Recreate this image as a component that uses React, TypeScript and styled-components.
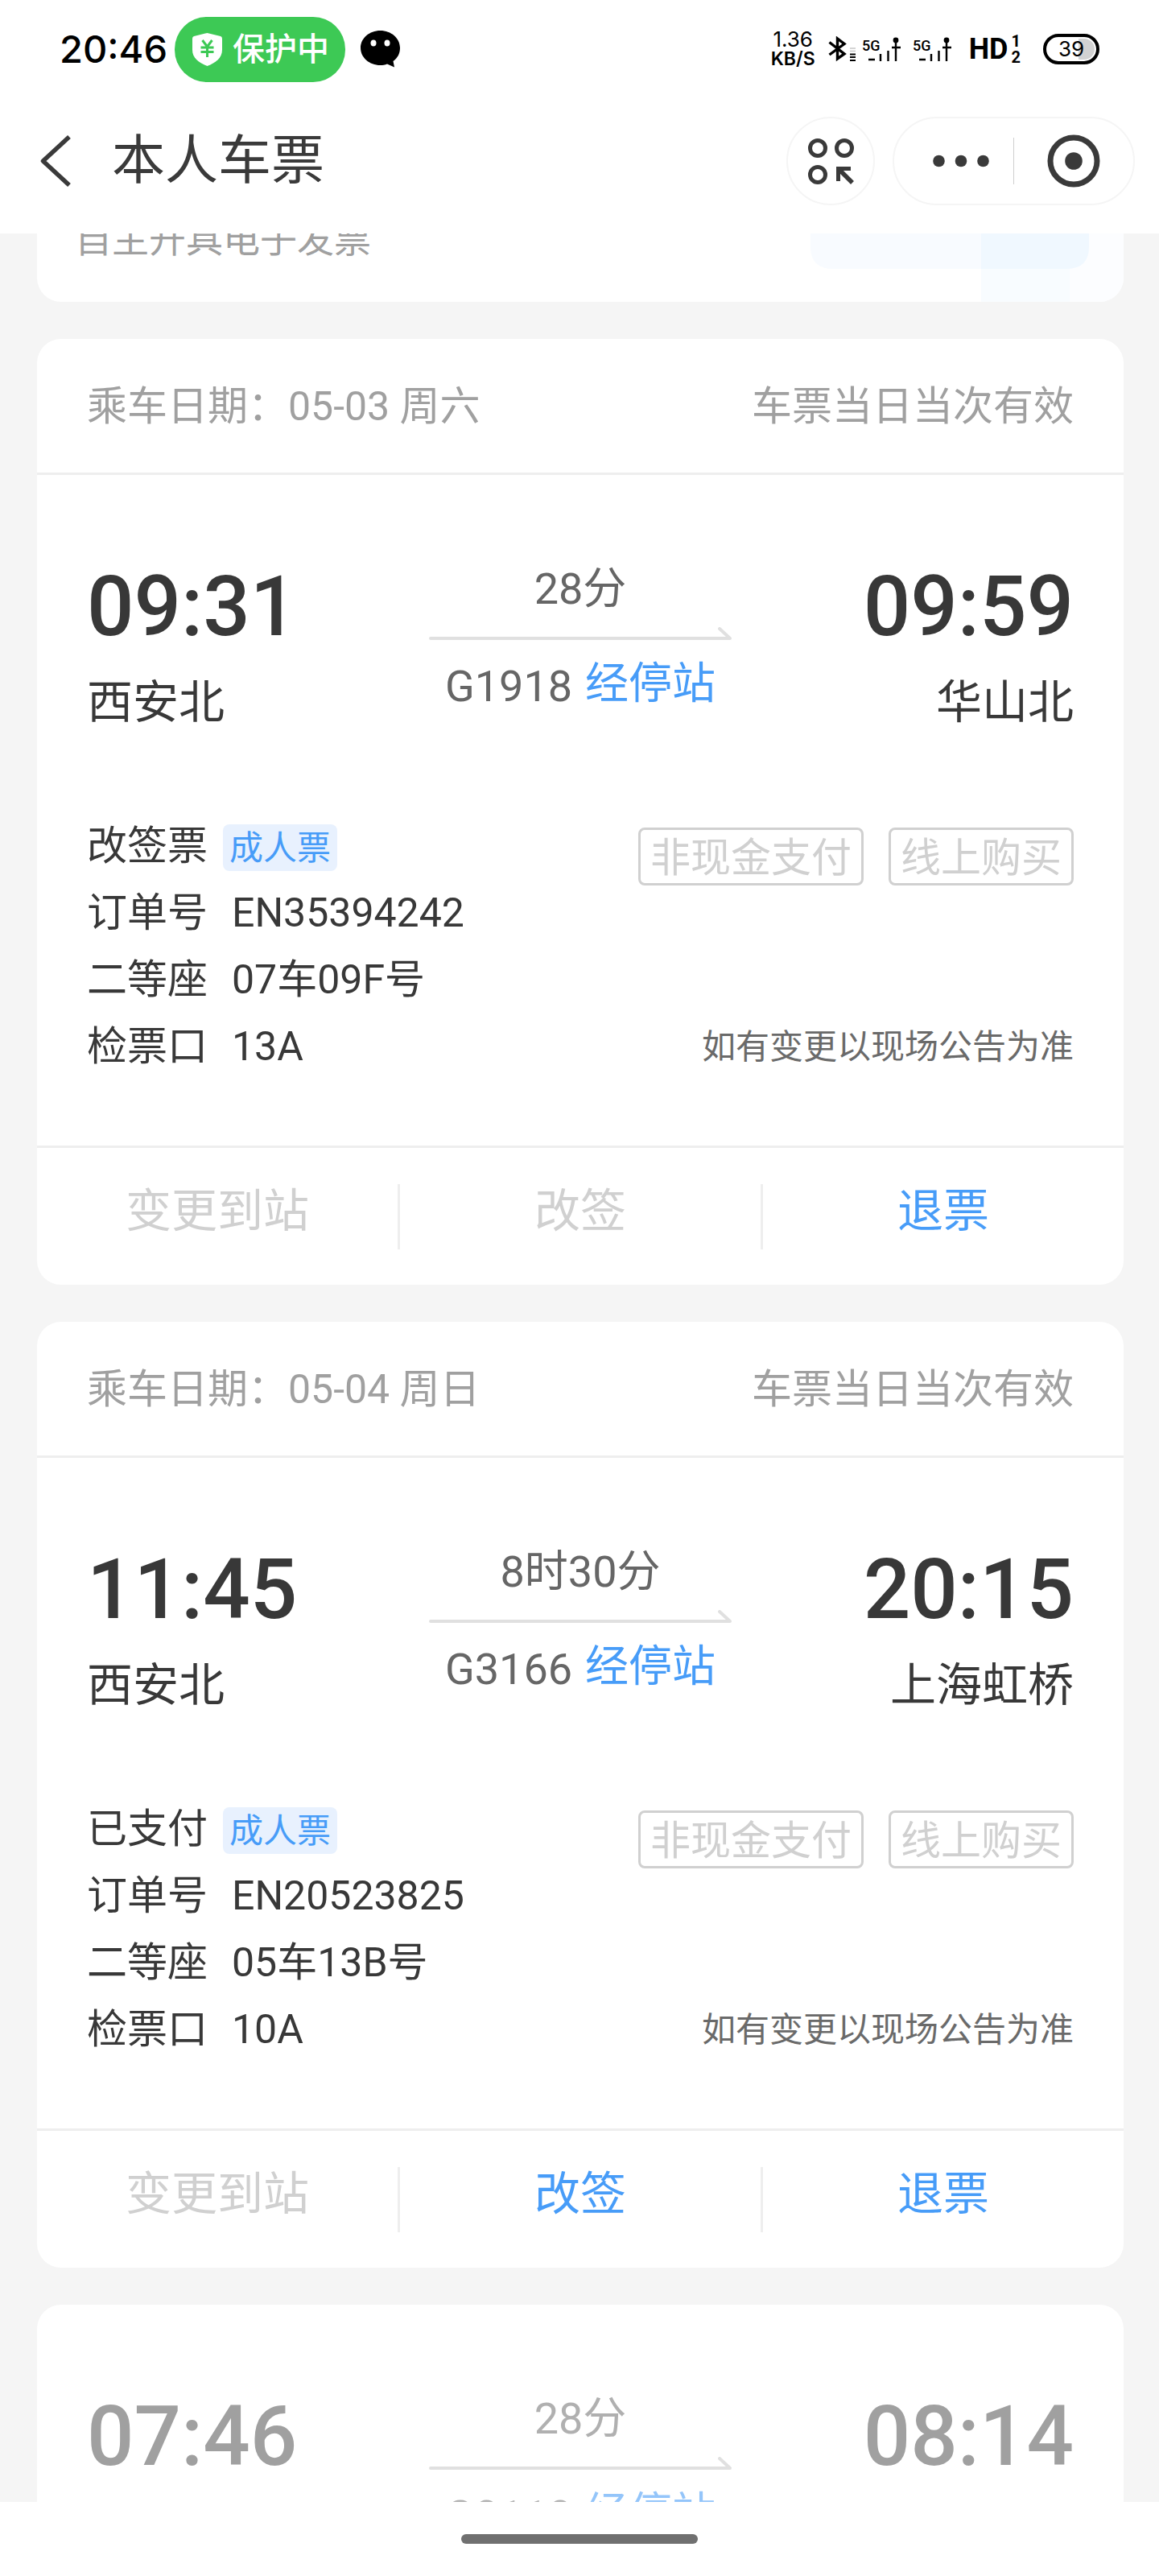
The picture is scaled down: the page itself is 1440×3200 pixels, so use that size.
import React from "react";
import styled, { createGlobalStyle } from "styled-components";

const GlobalStyle = createGlobalStyle`
  *, *::before, *::after { box-sizing: border-box; }
  body {
    margin: 0;
    background: #fff;
    color: #383838;
    font-family: Roboto, "Noto Sans CJK SC", sans-serif;
  }
  button { font: inherit; border: 0; padding: 0; background: none; color: inherit; }
  svg { display: block; flex: none; }
`;

const Screen = styled.div`
  display: flex;
  flex-direction: column;
  height: 100vh;
`;

/* ---------- status bar ---------- */

const StatusBar = styled.div`
  display: flex;
  align-items: center;
  justify-content: space-between;
  height: 122px;
  padding: 0 74px;
  color: #000;
  font-family: Inter, Roboto, "Noto Sans CJK SC", sans-serif;
`;

const StatusGroup = styled.div`
  display: flex;
  align-items: center;
`;

const Clock = styled.time`
  font-size: 47px;
  font-weight: 500;
  line-height: 60px;
`;

const ProtectPill = styled.div`
  display: flex;
  align-items: center;
  gap: 13px;
  height: 81px;
  margin: 0 19px 0 9px;
  padding: 0 20px 0 22px;
  border-radius: 40px;
  background: #3dc955;
  color: #fff;
  font-size: 40px;
  font-weight: 500;
  line-height: 60px;
`;

const Speed = styled.div`
  display: flex;
  flex-direction: column;
  align-items: center;
  margin-right: 16px;
  font-size: 26px;
  line-height: 24px;
`;

const SpeedUnit = styled.span`
  font-size: 23px;
  font-weight: 600;
`;

const Signals = styled.div`
  display: flex;
  gap: 15px;
  margin: 0 22px 0 8px;
`;

const HdMark = styled.div`
  display: flex;
  align-items: center;
  gap: 4px;
  margin-right: 28px;
  font-family: "Liberation Sans Narrow", Roboto, sans-serif;
  font-size: 36px;
  font-weight: 700;
  line-height: 40px;
`;

const SimSlots = styled.span`
  display: flex;
  flex-direction: column;
  font-size: 20px;
  line-height: 20px;
`;

const Battery = styled.div`
  display: flex;
  align-items: center;
  justify-content: center;
  width: 70px;
  height: 38px;
  border: 4px solid #000;
  border-radius: 19px;
  background: linear-gradient(to right, #fff 64%, #d2d2d2 64%) padding-box;
  box-shadow: inset 0 0 0 2px #fff;
  font-size: 26px;
  line-height: 30px;
`;

/* ---------- navigation bar ---------- */

const NavBar = styled.header`
  display: flex;
  align-items: center;
  height: 168px;
  padding: 0 30px 12px 48px;
  color: #3a3a3a;
`;

const BackButton = styled.button`
  padding-right: 50px;
`;

const Title = styled.h1`
  flex: 1;
  margin: 0;
  font-size: 66px;
  font-weight: 400;
  line-height: 80px;
`;

const RoundButton = styled.button`
  display: flex;
  align-items: center;
  justify-content: center;
  width: 110px;
  height: 110px;
  margin-right: 22px;
  border: 2px solid #f5f5f5;
  border-radius: 55px;
`;

const Capsule = styled.div`
  display: flex;
  align-items: center;
  height: 110px;
  border: 2px solid #f5f5f5;
  border-radius: 55px;
`;

const CapsuleButton = styled.button`
  display: flex;
  align-items: center;
  justify-content: center;
  width: 148px;
  height: 106px;
  &:first-child { padding-left: 18px; }
`;

const CapsuleRule = styled.span`
  width: 1px;
  height: 58px;
  background: #d0d0d0;
`;

/* ---------- ticket list ---------- */

const Scroller = styled.main`
  flex: 1;
  min-height: 0;
  overflow-y: auto;
  scrollbar-width: none;
  padding: 0 44px 0 46px;
  background: #f5f5f5;
`;

const List = styled.div`
  display: flex;
  flex-direction: column;
  gap: 46px;
  margin-top: -50px;
`;

const Card = styled.article`
  overflow: hidden;
  flex: none;
  border-radius: 30px;
  background: #fff;
`;

const InvoiceCard = styled(Card)`
  display: flex;
  justify-content: space-between;
`;

const InvoiceText = styled.p`
  margin: 0;
  padding: 27px 0 48px 47px;
  color: #a0a0a0;
  font-size: 46px;
  line-height: 60px;
`;

const CardHead = styled.div`
  display: flex;
  justify-content: space-between;
  padding: 49px 62px 47px;
  border-bottom: 3px solid #eee;
  color: #a0a0a0;
  font-size: 50px;
  line-height: 70px;
`;

const Route = styled.div<{ $past?: boolean }>`
  display: grid;
  grid-template-columns: 1fr 377px 1fr;
  padding: 105px 62px 102px;
  color: ${(p) => (p.$past ? "#a0a0a0" : "#383838")};
`;

const Stop = styled.div<{ $end?: boolean }>`
  display: flex;
  flex-direction: column;
  gap: 25px;
  text-align: ${(p) => (p.$end ? "right" : "left")};
`;

const StopTime = styled.time`
  font-size: 103px;
  font-weight: 500;
  line-height: 118px;
`;

const StopName = styled.span`
  font-size: 57px;
  line-height: 70px;
`;

const Trip = styled.div<{ $past?: boolean }>`
  display: flex;
  flex-direction: column;
  align-items: center;
  height: 213px;
  padding-top: 7px;
  color: ${(p) => (p.$past ? "#b0b0b0" : "#666")};
  font-size: 54px;
  line-height: 60px;
`;

const TripArrow = styled.svg`
  width: 377px;
  height: 16px;
  margin: 17px 0 25px;
`;

const TrainLine = styled.div`
  display: flex;
  align-items: flex-start;
  gap: 16px;
`;

const TrainNumber = styled.span`
  line-height: 66px;
`;

const StopsLink = styled.a<{ $past?: boolean }>`
  color: ${(p) => (p.$past ? "#94c5fa" : "#479cf8")};
  text-decoration: none;
`;

const Info = styled.div`
  display: flex;
  justify-content: space-between;
  padding: 0 62px 81px;
`;

const InfoRow = styled.div`
  display: flex;
  align-items: center;
  font-size: 50px;
  line-height: 83px;
`;

const InfoValue = styled.span`
  margin-left: 30px;
`;

const PassengerTag = styled.span`
  margin: 3px 0 0 19px;
  padding: 2px 8px 0;
  border-radius: 8px;
  background: #e8f1fe;
  color: #479cf8;
  font-size: 42px;
  line-height: 56px;
`;

const InfoSide = styled.div`
  display: flex;
  flex-direction: column;
  align-items: flex-end;
  justify-content: space-between;
  padding-top: 18px;
`;

const Badges = styled.div`
  display: flex;
  gap: 31px;
`;

const Badge = styled.span`
  padding: 4px 12px 0;
  border: 3px solid #d0d0d0;
  border-radius: 8px;
  color: #d0d0d0;
  font-size: 50px;
  line-height: 62px;
`;

const Notice = styled.span`
  color: #6a6a6a;
  font-size: 42px;
  line-height: 83px;
`;

const Actions = styled.div`
  display: grid;
  grid-template-columns: 1fr auto 1fr auto 1fr;
  align-items: center;
  height: 173px;
  border-top: 3px solid #eee;
`;

const ActionButton = styled.button`
  height: 170px;
  padding-bottom: 12px;
  color: #479cf8;
  font-size: 57px;
  line-height: 70px;
  &:disabled { color: #d0d0d0; }
`;

const ActionRule = styled.span`
  width: 3px;
  height: 81px;
  background: #eee;
`;

const GestureArea = styled.footer`
  display: flex;
  justify-content: center;
  height: 92px;
  padding-top: 40px;
`;

const GestureBar = styled.span`
  width: 294px;
  height: 12px;
  border-radius: 6px;
  background: #707070;
`;

/* ---------- icons ---------- */

const ShieldIcon = () => (
  <svg width="37" height="41" viewBox="0 0 37 41" aria-hidden="true">
    <path d="M18.500 0 L35 4 Q37 4.500 37 7 V21 C37 31 29 37 18.500 41 C8 37 0 31 0 21 V7 Q0 4.500 2 4 Z" fill="#fff" />
    <path d="M12.500 9 L18.500 17 L24.500 9 M10.500 18 H26.500 M10.500 23.500 H26.500 M18.500 17 V30" fill="none" stroke="#3dc955" strokeWidth="3" />
  </svg>
);

const FaceIcon = () => (
  <svg width="50" height="46" viewBox="0 0 50 46" aria-hidden="true">
    <path d="M24.500 0 C38 0 49 9.500 49 21.500 C49 28.500 46 34 40.500 38 L42 45.500 L33 41.500 C30.500 42.500 27.500 43 24.500 43 C11 43 0 33.500 0 21.500 C0 9.500 11 0 24.500 0 Z" fill="#000" />
    <ellipse cx="16" cy="15.500" rx="3.500" ry="4" fill="#fff" />
    <ellipse cx="33" cy="15.500" rx="3.500" ry="4" fill="#fff" />
  </svg>
);

const BluetoothIcon = () => (
  <svg width="34" height="32" viewBox="0 0 34 32" aria-hidden="true">
    <path d="M1.500 7.500 L20 22 L11.500 28 V3 L20 9.500 L1.500 23" fill="none" stroke="#000" strokeWidth="3.400" />
    <path d="M27 15 H34 M27 18.500 H34" stroke="#c8c8c8" strokeWidth="1.500" />
    <path d="M27 22.500 H34 M27 26 H34 M27 30 H34" stroke="#000" strokeWidth="2" />
  </svg>
);

const SignalIcon = () => (
  <svg width="48" height="32" viewBox="0 0 48 32">
    <text x="0" y="18" fontFamily="Roboto, sans-serif" fontSize="18" fontWeight="500">5G</text>
    <path d="M8 29 H16 M23 22 V31 M32.500 18 V31 M42 4 V31 M37 14 H48" stroke="#000" strokeWidth="2.400" fill="none" />
    <circle cx="42" cy="5" r="3.400" fill="#000" />
  </svg>
);

const BackIcon = () => (
  <svg width="41" height="64" viewBox="0 0 41 64" aria-hidden="true">
    <path d="M38 2 L5.500 32 L38 62" fill="none" stroke="#3a3a3a" strokeWidth="5.500" strokeLinejoin="round" />
  </svg>
);

const AppsIcon = () => (
  <svg width="57" height="57" viewBox="0 0 57 57" aria-hidden="true">
    <g fill="none" stroke="#3a3a3a" strokeWidth="5">
      <circle cx="12" cy="12" r="9.500" />
      <circle cx="45" cy="12" r="9.500" />
      <circle cx="12" cy="45" r="9.500" />
      <path d="M37.500 53 V37.500 H53" />
      <path d="M38.500 38.500 L55 55" strokeWidth="5.500" />
    </g>
  </svg>
);

const MoreIcon = () => (
  <svg width="70" height="16" viewBox="0 0 70 16" aria-hidden="true" fill="#3a3a3a">
    <circle cx="7.500" cy="8" r="7.300" />
    <circle cx="35" cy="8" r="7.300" />
    <circle cx="62.500" cy="8" r="7.300" />
  </svg>
);

const CloseIcon = () => (
  <svg width="66" height="66" viewBox="0 0 66 66" aria-hidden="true">
    <circle cx="33" cy="33" r="29" fill="none" stroke="#3a3a3a" strokeWidth="7" />
    <circle cx="33" cy="33" r="10.800" fill="#3a3a3a" />
  </svg>
);

const InvoiceArt = () => (
  <svg width="389" height="135" viewBox="0 0 389 135" aria-hidden="true">
    <rect x="212" width="177" height="135" fill="#fcfdff" />
    <rect x="212" width="110" height="135" fill="#f8fcff" />
    <path d="M0 0 H346 V66 Q346 94 318 94 H28 Q0 94 0 66 Z" fill="#f8fbff" />
    <path d="M212 0 H346 V66 Q346 94 318 94 H212 Z" fill="#f0f8ff" />
  </svg>
);

/* ---------- data and page ---------- */

interface Journey {
  depart: string;
  arrive: string;
  from: string;
  to: string;
  duration: string;
  train: string;
}

interface Ticket extends Journey {
  date: string;
  status: string;
  order: string;
  seat: string;
  gate: string;
  canRebook: boolean;
}

const tickets: Ticket[] = [
  {
    date: "05-03 周六", depart: "09:31", arrive: "09:59", from: "西安北", to: "华山北",
    duration: "28分", train: "G1918", status: "改签票", order: "EN35394242",
    seat: "07车09F号", gate: "13A", canRebook: false,
  },
  {
    date: "05-04 周日", depart: "11:45", arrive: "20:15", from: "西安北", to: "上海虹桥",
    duration: "8时30分", train: "G3166", status: "已支付", order: "EN20523825",
    seat: "05车13B号", gate: "10A", canRebook: true,
  },
];

const pastJourney: Journey = {
  depart: "07:46", arrive: "08:14", from: "华山北", to: "西安北", duration: "28分", train: "G3118",
};

function RouteSection({ journey, past }: { journey: Journey; past?: boolean }) {
  return (
    <Route $past={past}>
      <Stop>
        <StopTime>{journey.depart}</StopTime>
        <StopName>{journey.from}</StopName>
      </Stop>
      <Trip $past={past}>
        <span>{journey.duration}</span>
        <TripArrow viewBox="0 0 377 16" aria-hidden="true">
          <path d="M2 14 H374 L361 2" fill="none" stroke="#e0e0e0" strokeWidth="4" strokeLinecap="round" strokeLinejoin="round" />
        </TripArrow>
        <TrainLine>
          <TrainNumber>{journey.train}</TrainNumber>
          <StopsLink href="#stops" $past={past}>经停站</StopsLink>
        </TrainLine>
      </Trip>
      <Stop $end>
        <StopTime>{journey.arrive}</StopTime>
        <StopName>{journey.to}</StopName>
      </Stop>
    </Route>
  );
}

function TicketCard({ ticket }: { ticket: Ticket }) {
  return (
    <Card>
      <CardHead>
        <span>乘车日期：{ticket.date}</span>
        <span>车票当日当次有效</span>
      </CardHead>
      <RouteSection journey={ticket} />
      <Info>
        <div>
          <InfoRow>{ticket.status}<PassengerTag>成人票</PassengerTag></InfoRow>
          <InfoRow>订单号<InfoValue>{ticket.order}</InfoValue></InfoRow>
          <InfoRow>二等座<InfoValue>{ticket.seat}</InfoValue></InfoRow>
          <InfoRow>检票口<InfoValue>{ticket.gate}</InfoValue></InfoRow>
        </div>
        <InfoSide>
          <Badges>
            <Badge>非现金支付</Badge>
            <Badge>线上购买</Badge>
          </Badges>
          <Notice>如有变更以现场公告为准</Notice>
        </InfoSide>
      </Info>
      <Actions>
        <ActionButton disabled>变更到站</ActionButton>
        <ActionRule />
        <ActionButton disabled={!ticket.canRebook}>改签</ActionButton>
        <ActionRule />
        <ActionButton>退票</ActionButton>
      </Actions>
    </Card>
  );
}

export default function App() {
  return (
    <Screen lang="zh-CN">
      <GlobalStyle />
      <StatusBar>
        <StatusGroup>
          <Clock>20:46</Clock>
          <ProtectPill><ShieldIcon />保护中</ProtectPill>
          <FaceIcon />
        </StatusGroup>
        <StatusGroup>
          <Speed>1.36<SpeedUnit>KB/S</SpeedUnit></Speed>
          <BluetoothIcon />
          <Signals><SignalIcon /><SignalIcon /></Signals>
          <HdMark>HD<SimSlots><span>1</span><span>2</span></SimSlots></HdMark>
          <Battery>39</Battery>
        </StatusGroup>
      </StatusBar>
      <NavBar>
        <BackButton aria-label="返回"><BackIcon /></BackButton>
        <Title>本人车票</Title>
        <RoundButton aria-label="小程序"><AppsIcon /></RoundButton>
        <Capsule>
          <CapsuleButton aria-label="更多"><MoreIcon /></CapsuleButton>
          <CapsuleRule />
          <CapsuleButton aria-label="关闭"><CloseIcon /></CapsuleButton>
        </Capsule>
      </NavBar>
      <Scroller>
        <List>
          <InvoiceCard>
            <InvoiceText>自主开具电子发票</InvoiceText>
            <InvoiceArt />
          </InvoiceCard>
          {tickets.map((ticket) => <TicketCard key={ticket.order} ticket={ticket} />)}
          <Card><RouteSection journey={pastJourney} past /></Card>
        </List>
      </Scroller>
      <GestureArea><GestureBar /></GestureArea>
    </Screen>
  );
}
